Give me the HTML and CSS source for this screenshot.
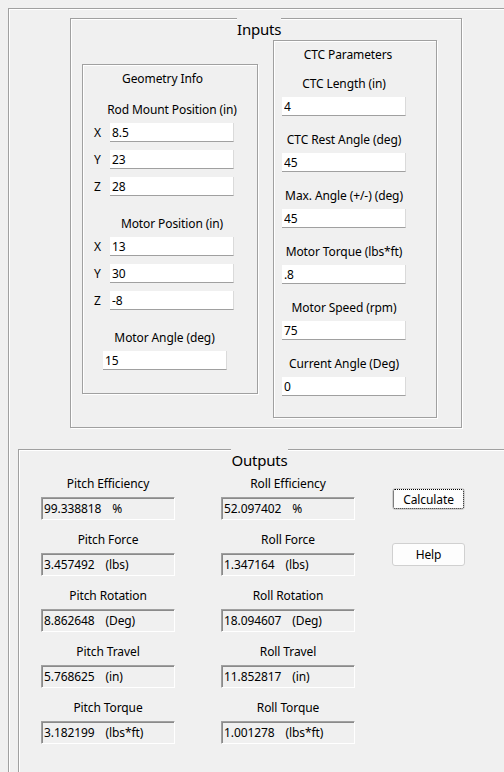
FILE: index.html
```html
<!DOCTYPE html>
<html lang="en">
<head>
    <meta charset="UTF-8">
    <title>CTC Calculator</title>
    <link rel="stylesheet" href="styles.css">
</head>
<body>
    <div class="main">
        <!-- Inputs group -->
        <div class="group inputs">
            <div class="group-title inputs-title">Inputs</div>
            <div class="inputs-body">
                <div class="box geometry">
                    <div class="label geo-title">Geometry Info</div>
                    <div class="label geo-rod">Rod Mount Position (in)</div>
                    <div class="xyz first"><span class="axis">X</span><input class="field" type="text" value="8.5"></div>
                    <div class="xyz"><span class="axis">Y</span><input class="field" type="text" value="23"></div>
                    <div class="xyz"><span class="axis">Z</span><input class="field" type="text" value="28"></div>
                    <div class="label geo-motor">Motor Position (in)</div>
                    <div class="xyz first"><span class="axis">X</span><input class="field" type="text" value="13"></div>
                    <div class="xyz"><span class="axis">Y</span><input class="field" type="text" value="30"></div>
                    <div class="xyz"><span class="axis">Z</span><input class="field" type="text" value="-8"></div>
                    <div class="label geo-angle">Motor Angle (deg)</div>
                    <input class="field angle-field" type="text" value="15">
                </div>

                <div class="box ctc">
                    <div class="ctc-col">
                        <div class="label ctc-title">CTC Parameters</div>
                        <div class="label ctc-label first">CTC Length (in)</div>
                        <input class="field" type="text" value="4">
                        <div class="label ctc-label">CTC Rest Angle (deg)</div>
                        <input class="field" type="text" value="45">
                        <div class="label ctc-label">Max. Angle (+/-) (deg)</div>
                        <input class="field" type="text" value="45">
                        <div class="label ctc-label">Motor Torque (lbs*ft)</div>
                        <input class="field" type="text" value=".8">
                        <div class="label ctc-label">Motor Speed (rpm)</div>
                        <input class="field" type="text" value="75">
                        <div class="label ctc-label">Current Angle (Deg)</div>
                        <input class="field" type="text" value="0">
                    </div>
                </div>
            </div>
        </div>

        <!-- Outputs group -->
        <div class="group outputs">
            <div class="group-title outputs-title">Outputs</div>
            <div class="outputs-body">
                <div class="out-col">
                    <div class="label out-label first">Pitch Efficiency</div>
                    <div class="readout">99.338818<span class="unit">%</span></div>
                    <div class="label out-label">Pitch Force</div>
                    <div class="readout">3.457492<span class="unit">(lbs)</span></div>
                    <div class="label out-label">Pitch Rotation</div>
                    <div class="readout">8.862648<span class="unit">(Deg)</span></div>
                    <div class="label out-label">Pitch Travel</div>
                    <div class="readout">5.768625<span class="unit">(in)</span></div>
                    <div class="label out-label">Pitch Torque</div>
                    <div class="readout">3.182199<span class="unit">(lbs*ft)</span></div>
                </div>
                <div class="out-col roll">
                    <div class="label out-label first">Roll Efficiency</div>
                    <div class="readout">52.097402<span class="unit">%</span></div>
                    <div class="label out-label">Roll Force</div>
                    <div class="readout">1.347164<span class="unit">(lbs)</span></div>
                    <div class="label out-label">Roll Rotation</div>
                    <div class="readout">18.094607<span class="unit">(Deg)</span></div>
                    <div class="label out-label">Roll Travel</div>
                    <div class="readout">11.852817<span class="unit">(in)</span></div>
                    <div class="label out-label">Roll Torque</div>
                    <div class="readout">1.001278<span class="unit">(lbs*ft)</span></div>
                </div>
                <div class="buttons">
                    <button class="btn btn-focus" type="button">Calculate</button>
                    <button class="btn btn-help" type="button">Help</button>
                </div>
            </div>
        </div>
    </div>
</body>
</html>
```

FILE: styles.css
```css
* {
    margin: 0;
    padding: 0;
    box-sizing: border-box;
}

body {
    width: 504px;
    height: 772px;
    overflow: hidden;
    background: #f0f0f0;
    color: #000;
    font-family: "Noto Sans", "Open Sans", sans-serif;
    font-size: 12px;
    letter-spacing: -0.1px;
}

/* etched frames */
.main {
    margin: 8px 0 0 8px;
    height: 764px;
    border-top: 1px solid #a0a0a0;
    border-left: 1px solid #a0a0a0;
    box-shadow: inset 1px 1px 0 #fff;
    overflow: hidden;
}

.group {
    border: 1px solid #a0a0a0;
    box-shadow: inset 1px 1px 0 #fff, 1px 1px 0 #fff;
}

.group-title {
    margin-top: -1px;
    height: 22px;
    line-height: 22px;
    background: #f0f0f0;
    font-size: 15px;
    letter-spacing: -0.2px;
    text-align: center;
    white-space: nowrap;
}

.label {
    height: 16px;
    line-height: 16px;
    white-space: nowrap;
}

/* ---------- Inputs ---------- */
.inputs {
    width: 392px;
    height: 410px;
    margin: 9px 0 0 61px;
}

.inputs-title {
    width: 44px;
    margin-left: 166px;
}

.inputs-body {
    display: flex;
    align-items: flex-start;
}

.box {
    border: 1px solid #a0a0a0;
    box-shadow: inset 1px 1px 0 #fff, 1px 1px 0 #fff;
}

.field {
    display: block;
    width: 124px;
    height: 19px;
    padding: 0 0 0 2px;
    background: #fff;
    border: none;
    border-bottom: 1px solid #a0a0a0;
    border-right: 1px solid #dadada;
    font-family: inherit;
    font-size: 12px;
    letter-spacing: -0.1px;
    color: #000;
    outline: none;
}

.geometry {
    width: 176px;
    height: 330px;
    margin: 24px 0 0 11px;
}

.geometry .label {
    text-align: center;
}

.geo-title {
    margin-top: 6px;
    padding-right: 15px;
}

.geo-rod {
    margin-top: 15px;
    padding-left: 4px;
}

.geo-motor {
    margin-top: 20px;
    padding-left: 4px;
}

.geo-angle {
    margin-top: 20px;
    padding-right: 11px;
}

.xyz {
    display: flex;
    align-items: center;
    margin-top: 8px;
}

.xyz.first {
    margin-top: 5px;
}

.axis {
    width: 16px;
    margin-left: 11px;
    line-height: 19px;
}

.angle-field {
    margin: 5px 0 0 20px;
}

.ctc {
    width: 164px;
    height: 378px;
    margin-left: 15px;
}

.ctc-col {
    width: 124px;
    margin-left: 8px;
    text-align: center;
}

.ctc-title {
    margin-top: 6px;
    padding-left: 8px;
}

.ctc-label {
    margin-top: 16px;
}

.ctc-label.first {
    margin-top: 13px;
}

.ctc-col .field {
    margin-top: 5px;
}

/* ---------- Outputs ---------- */
.outputs {
    width: 520px;
    height: 400px;
    margin: 21px 0 0 9px;
}

.outputs-title {
    width: 57px;
    margin-left: 212px;
}

.outputs-body {
    display: flex;
    align-items: flex-start;
    padding-left: 22px;
}

.out-col {
    width: 134px;
}

.out-col.roll {
    margin-left: 46px;
}

.out-label {
    margin-top: 12px;
    text-align: center;
}

.out-label.first {
    margin-top: 5px;
}

.readout {
    height: 23px;
    margin-top: 5px;
    padding-left: 2px;
    line-height: 21px;
    white-space: nowrap;
    border: 1px solid;
    border-color: #a0a0a0 #fff #fff #a0a0a0;
    box-shadow: inset 1px 1px 0 #8a8a8a;
}

.unit {
    margin-left: 11px;
}

.buttons {
    display: flex;
    flex-direction: column;
    margin-left: 37px;
}

.btn {
    width: 73px;
    height: 22px;
    background: #fdfdfd;
    border: 1px solid #d0d0d0;
    border-radius: 3px;
    font-family: inherit;
    font-size: 12px;
    letter-spacing: -0.1px;
    color: #000;
}

.btn-focus {
    margin-top: 17px;
    outline: 1px dotted #000;
    outline-offset: -2px;
}

.btn-help {
    height: 23px;
    margin-top: 33px;
}
```
